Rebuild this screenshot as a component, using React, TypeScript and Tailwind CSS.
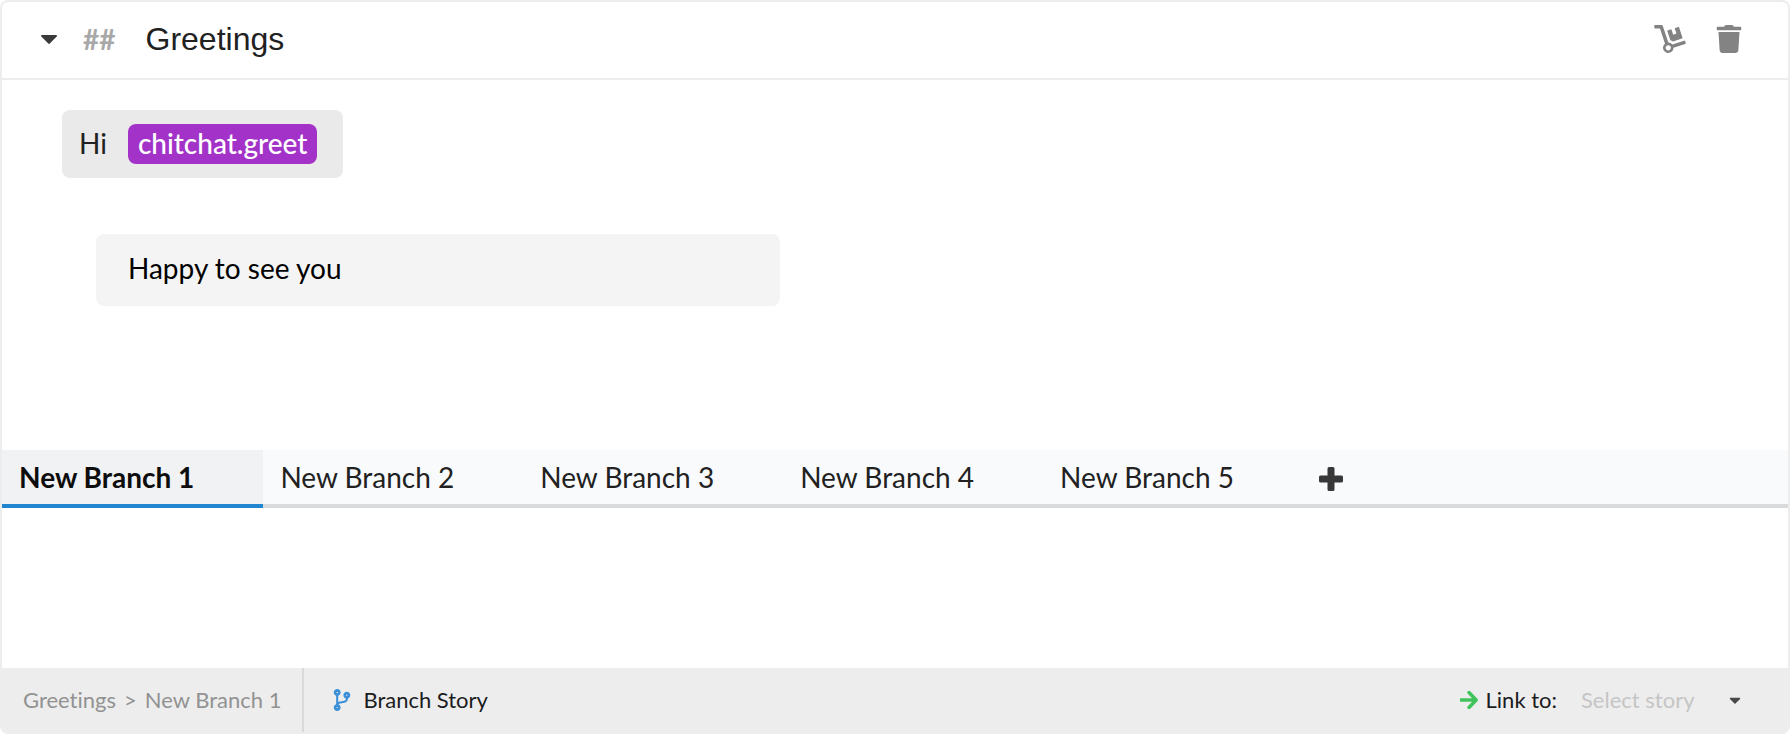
import { useState } from "react";
import { FaCaretDown, FaCodeBranch, FaDolly, FaTrash } from "react-icons/fa";

const BRANCHES = ["New Branch 1", "New Branch 2", "New Branch 3", "New Branch 4", "New Branch 5"];

function Header() {
  return (
    <header className="flex h-[78px] items-center border-b-2 border-[#ededed] pr-[46px] pb-0.5 pl-[35px]">
      <button type="button" aria-label="Collapse story" className="flex w-6 justify-center text-[#3a3a3a]">
        <svg viewBox="0 0 16 9" className="h-[9px] w-4" fill="currentColor" aria-hidden="true">
          <path d="M1 0h14c.9 0 1.3 1 .7 1.600L8.800 8.600c-.4.4-1.100.4-1.500 0L.3 1.600C-.3 1 .1 0 1 0z" />
        </svg>
      </button>
      <span className="ml-[22px] text-[28px] leading-8 font-bold text-[#a8a8a8]">##</span>
      <input
        aria-label="Story title"
        defaultValue="Greetings"
        className="ml-[30px] min-w-0 flex-1 bg-transparent font-['Liberation_Sans',sans-serif] text-[32px] leading-10 text-[#212121] outline-none"
      />
      <div className="flex items-center gap-[30px] text-[#838383]">
        <button type="button" aria-label="Move story">
          <FaDolly className="h-7 w-8" />
        </button>
        <button type="button" aria-label="Delete story">
          <FaTrash className="h-7 w-[26px]" />
        </button>
      </div>
    </header>
  );
}

function Conversation() {
  return (
    <section className="flex min-h-[370px] flex-col items-start px-[60px] pt-[30px]">
      <div className="flex h-[68px] items-center gap-[21px] rounded-lg bg-[#eaeaea] pr-[26px] pl-[17px] text-[28px] leading-[38px] text-[#212121]">
        <span className="pb-0.5">Hi</span>
        <span className="rounded-lg bg-[#a333c8] px-[10px] pb-0.5 font-medium text-white">chitchat.greet</span>
      </div>
      <input
        aria-label="Response"
        defaultValue="Happy to see you"
        className="mt-14 ml-[34px] h-[72px] w-[684px] max-w-full rounded-lg bg-[#f4f4f4] px-8 pb-1 text-[28px] leading-10 text-black outline-none"
      />
    </section>
  );
}

function BranchTabs({ active, onSelect }: { active: string; onSelect: (name: string) => void }) {
  return (
    <div className="flex h-[58px] bg-[#f9fafc] text-[28px] leading-10" role="tablist">
      {BRANCHES.map((name) => (
        <button
          key={name}
          type="button"
          role="tab"
          aria-selected={name === active}
          onClick={() => onSelect(name)}
          className={
            name === active
              ? "border-b-4 border-[#2185d0] bg-[#f1f2f4] pr-[69px] pl-[17px] font-bold text-[#0d0d0d]"
              : "border-b-4 border-[#d9dadc] pr-[69px] pl-[17px] text-[#212121]"
          }
        >
          {name}
        </button>
      ))}
      <div className="flex flex-1 items-center border-b-4 border-[#d9dadc] pl-4 text-[#383838]">
        <button type="button" aria-label="Add branch" className="pt-1">
          <svg viewBox="0 0 24 24" className="size-6" fill="currentColor" aria-hidden="true">
            <path d="M10 0h4a1.500 1.500 0 0 1 1.500 1.500v7h7A1.500 1.500 0 0 1 24 10v4a1.500 1.500 0 0 1-1.500 1.500h-7v7A1.500 1.500 0 0 1 14 24h-4a1.500 1.500 0 0 1-1.500-1.500v-7h-7A1.500 1.500 0 0 1 0 14v-4a1.500 1.500 0 0 1 1.500-1.500h7v-7A1.500 1.500 0 0 1 10 0z" />
          </svg>
        </button>
      </div>
    </div>
  );
}

function Footer({ active }: { active: string }) {
  return (
    <footer className="flex h-16 bg-[#ededed] text-[22px] leading-8 text-[#1b1c1d]">
      <nav aria-label="Breadcrumb" className="flex items-center gap-2 border-r-2 border-[#d9d9d9] pr-[21px] pl-[21px] text-[#929292]">
        <a href="#greetings">Greetings</a>
        <span>&gt;</span>
        <a href="#branch">{active}</a>
      </nav>
      <button type="button" className="flex items-center gap-3 pl-[29px]">
        <FaCodeBranch className="h-[22px] w-[18px] text-[#3b8fd8]" />
        Branch Story
      </button>
      <div className="ml-auto flex items-center pr-11">
        <svg viewBox="0 0 18 18" className="mr-2 size-[18px] text-[#3fc35a]" fill="none" stroke="currentColor" strokeWidth="3.400" aria-hidden="true">
          <path d="M0 9h16M9 1.500 16.200 9 9 16.500" strokeLinejoin="round" strokeLinecap="round" />
        </svg>
        <label htmlFor="link-story">Link to:</label>
        <div className="ml-6 flex items-center">
          <select id="link-story" className="w-[145px] appearance-none bg-transparent text-[#c5c5c5] outline-none">
            <option>Select story</option>
          </select>
          <FaCaretDown className="pointer-events-none size-[18px] text-[#484848]" />
        </div>
      </div>
    </footer>
  );
}

export default function App() {
  const [active, setActive] = useState(BRANCHES[0]);
  return (
    <main className="overflow-hidden rounded-lg border-2 border-[#ededed] bg-white font-[Lato,sans-serif] [font-variant-ligatures:none]">
      <Header />
      <Conversation />
      <BranchTabs active={active} onSelect={setActive} />
      <div className="h-40" role="tabpanel" aria-label={active} />
      <Footer active={active} />
    </main>
  );
}
